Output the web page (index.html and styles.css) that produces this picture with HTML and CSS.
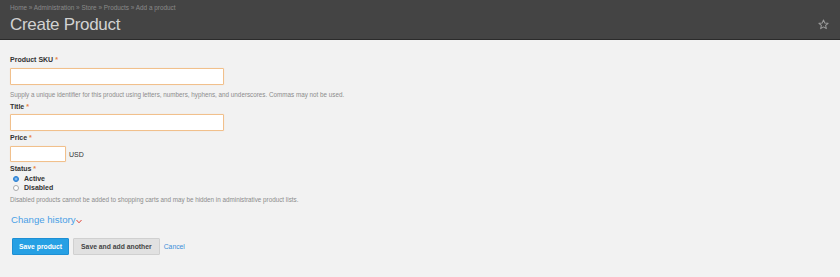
FILE: index.html
```html
<!DOCTYPE html>
<html lang="en">
<head>
  <meta charset="UTF-8" />
  <title>Create Product</title>
  <link rel="stylesheet" href="styles.css">
</head>
<body>

  <header class="page-header">
    <div class="breadcrumb">Home » Administration » Store » Products » Add a product</div>
    <h1 class="page-title">Create Product</h1>
    <svg class="shortcut" width="11" height="11" viewBox="0 0 24 24">
      <polygon points="12,2 14.9,8.6 22,9.3 16.6,14 18.2,21 12,17.3 5.8,21 7.4,14 2,9.3 9.1,8.6" fill="none" stroke="#9a9a9a" stroke-width="2.2" stroke-linejoin="round"/>
    </svg>
  </header>

  <form class="product-form">
    <div class="form-item item-sku">
      <label>Product SKU <span class="req">*</span></label>
      <input type="text" class="text-input wide">
      <div class="description">Supply a unique identifier for this product using letters, numbers, hyphens, and underscores. Commas may not be used.</div>
    </div>

    <div class="form-item">
      <label>Title <span class="req">*</span></label>
      <input type="text" class="text-input wide">
    </div>

    <div class="form-item">
      <label>Price <span class="req">*</span></label>
      <div class="price-row">
        <input type="text" class="text-input short">
        <span class="currency">USD</span>
      </div>
    </div>

    <div class="form-item">
      <label>Status <span class="req">*</span></label>
      <div class="radio"><span class="dot checked"></span>Active</div>
      <div class="radio"><span class="dot"></span>Disabled</div>
      <div class="description">Disabled products cannot be added to shopping carts and may be hidden in administrative product lists.</div>
    </div>

    <div class="history">
      <a href="#">Change history</a>
      <svg width="6" height="5" viewBox="0 0 6 5"><polyline points="0.5,1 3,3.8 5.5,1" fill="none" stroke="#e0463c" stroke-width="1"/></svg>
    </div>

    <div class="actions">
      <button type="button" class="btn btn-primary">Save product</button>
      <button type="button" class="btn">Save and add another</button>
      <a href="#" class="cancel">Cancel</a>
    </div>
  </form>

</body>
</html>
```

FILE: styles.css
```css
* {
  margin: 0; padding: 0; box-sizing: border-box;
}
body {
  background: #f2f2f2;
  font-family: 'Liberation Sans', Arial, sans-serif;
  color: #333;
  width: 840px;
  height: 277px;
  overflow: hidden;
}

/* header */
.page-header {
  position: relative;
  height: 40px;
  background: #444;
  border-bottom: 1px solid #2b2b2b;
  padding: 3px 10px 0;
}
.breadcrumb {
  font-size: 6.4px;
  line-height: 10px;
  color: #8a8a8a;
}
.page-title {
  margin-top: 2px;
  font-size: 17px;
  font-weight: normal;
  line-height: 20px;
  letter-spacing: -0.3px;
  color: #d2d2d2;
}
.shortcut {
  position: absolute;
  right: 11px;
  top: 19px;
}

/* form */
.product-form {
  padding: 15px 10px 0;
}
.form-item label {
  display: block;
  font-size: 7px;
  font-weight: bold;
  line-height: 10px;
  color: #333;
}
.req {
  color: #e8843f;
}
.text-input {
  display: block;
  height: 17px;
  background: #fff;
  border: 1px solid #f1c08c;
  border-radius: 1px;
  box-shadow: 0 0 1px #f6d6b2;
}
.text-input.wide {
  width: 214px;
  margin-top: 3px;
}
.text-input.short {
  width: 56px;
  height: 16px;
}
.description {
  margin-top: 5px;
  font-size: 6.3px;
  line-height: 10px;
  color: #8c8c8c;
}
.form-item + .form-item {
  margin-top: 2px;
}
.form-item:nth-child(2) .text-input {
  margin-top: 2px;
}
.price-row {
  display: flex;
  align-items: center;
  gap: 3px;
  margin-top: 3px;
}
.currency {
  font-size: 7px;
  color: #333;
}
.form-item:nth-child(4) {
  margin-top: 2px;
}
.radio {
  display: flex;
  align-items: center;
  gap: 5px;
  padding-left: 3px;
  font-size: 7px;
  font-weight: bold;
  line-height: 9px;
  color: #333;
}
.dot {
  width: 6px;
  height: 6px;
  border-radius: 50%;
  background: #fff;
  border: 1px solid #aaa;
}
.dot.checked {
  background: #2f8ae0;
  border-color: #2a7fd0;
  box-shadow: inset 0 0 0 1.2px #2f8ae0, inset 0 0 0 3px #fff;
}
.form-item:nth-child(4) .description {
  margin-top: 3px;
}

.history {
  display: flex;
  align-items: center;
  margin-top: 8px;
  padding-left: 1px;
  line-height: 14px;
}
.history a {
  font-size: 9.6px;
  color: #4aa0e6;
  text-decoration: none;
}
.history svg {
  margin-top: 2px;
}

.actions {
  display: flex;
  align-items: center;
  gap: 4px;
  margin-top: 11px;
  padding-left: 2px;
}
.btn {
  height: 17px;
  padding: 0 7px;
  border: 1px solid #d0d0d0;
  border-radius: 1px;
  background: #e1e1e1;
  font-family: 'Liberation Sans', Arial, sans-serif;
  font-size: 6.8px;
  font-weight: bold;
  color: #444;
  white-space: nowrap;
}
.btn-primary {
  padding: 0 6px;
  background: #26a0e4;
  border-color: #1d8fd4;
  color: #fff;
}
.cancel {
  font-size: 6.8px;
  color: #3b8fd9;
  text-decoration: none;
}
```
